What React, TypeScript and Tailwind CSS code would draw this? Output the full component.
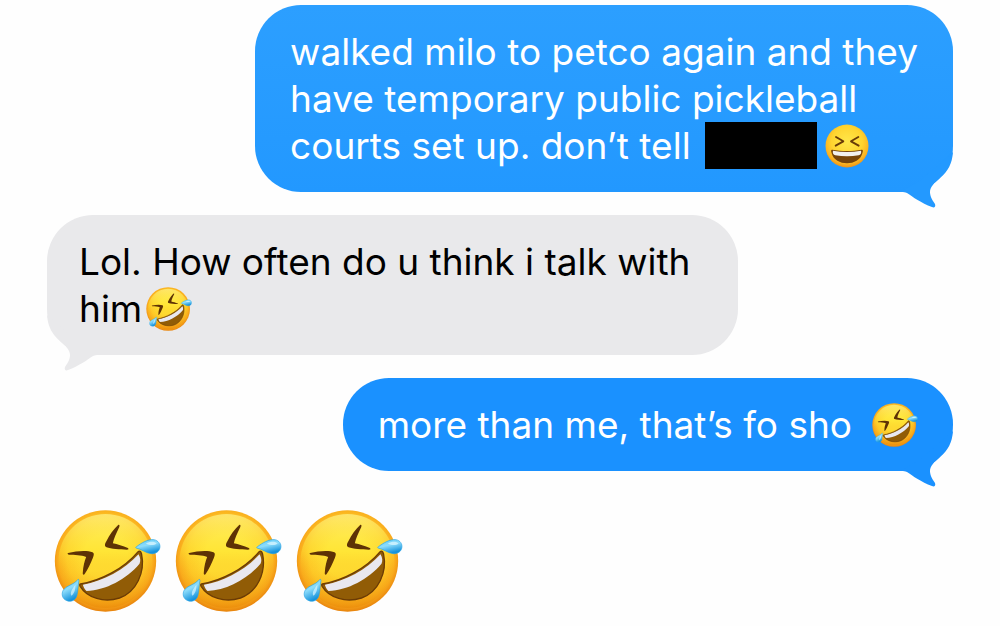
import { useId, type ReactNode } from "react"

function RoflEmoji({ className }: { className: string }) {
  const id = useId()
  const face = `${id}-face`
  const shine = `${id}-shine`
  const tear = `${id}-tear`

  return (
    <svg viewBox="30 30 320 306" className={className} role="img" aria-label="rolling on the floor laughing">
      <defs>
        <radialGradient id={face} cx="0.5" cy="0.46" r="0.54">
          <stop offset="0.4" stopColor="#ffe034" />
          <stop offset="0.7" stopColor="#fecb28" />
          <stop offset="0.88" stopColor="#f9aa1c" />
          <stop offset="1" stopColor="#e8830c" />
        </radialGradient>
        <linearGradient id={shine} x1="0" y1="0" x2="0" y2="1">
          <stop offset="0" stopColor="#fff58a" stopOpacity="0.7" />
          <stop offset="0.4" stopColor="#ffee3a" stopOpacity="0.35" />
          <stop offset="0.6" stopColor="#f9b51c" stopOpacity="0.15" />
          <stop offset="1" stopColor="#ea8a08" stopOpacity="0.65" />
        </linearGradient>
        <linearGradient id={tear} x1="0" y1="0" x2="0.4" y2="1">
          <stop offset="0" stopColor="#63cdf6" />
          <stop offset="0.5" stopColor="#8cdcfb" />
          <stop offset="1" stopColor="#1592dc" />
        </linearGradient>
      </defs>
      <circle cx="184" cy="183" r="152" fill={`url(#${face})`} />
      <circle cx="184" cy="183" r="141" fill={`url(#${shine})`} />
      <path
        d="M72 159C98 152 130 150 145 157C151 160 149 167 146 174C139 190 131 209 121 223C117 226 115 222 116 217C117 199 121 183 126 171C111 164 91 165 74 164C70 163 69 160 72 159Z"
        fill="#5e3205"
      />
      <path
        d="M222 75C226 73 227 77 225 82C217 99 209 115 206 130C219 133 237 138 251 144C255 147 253 149 248 149C228 149 200 147 187 142C180 138 182 131 187 123C196 105 208 88 222 75Z"
        fill="#5e3205"
      />
      <path
        d="M109 252C167 243 239 207 282 155C286 151 290 155 292 161C304 218 276 276 226 294C180 309 129 294 108 259C106 255 106 253 109 252Z"
        fill="#915c06"
      />
      <path
        d="M116 254C177 244 241 209 283 163C289 173 290 184 286 191C246 238 186 270 127 273C122 268 118 261 116 254Z"
        fill="#e9e8ef"
      />
      <path
        d="M109 252C167 243 239 207 282 155C286 151 290 155 292 161C304 218 276 276 226 294C180 309 129 294 108 259C106 255 106 253 109 252Z"
        fill="none"
        stroke="#6b3b05"
        strokeWidth="4"
      />
      <path
        d="M276 141C291 129 312 117 329 119C342 121 349 132 347 143C345 155 334 162 321 161C305 159 293 148 276 144C274 143 274 142 276 141Z"
        fill={`url(#${tear})`}
        stroke="#2ba5e5"
        strokeWidth="2"
      />
      <path
        d="M100 240C103 236 105 239 104 244C101 259 102 274 98 287C94 301 80 307 68 302C54 297 51 282 57 271C66 256 88 255 100 240Z"
        fill={`url(#${tear})`}
        stroke="#2ba5e5"
        strokeWidth="2"
      />
      <path d="M305 131C316 124 331 123 337 131C329 137 317 136 305 131Z" fill="#d9f5ff" opacity="0.75" />
      <path d="M94 254C94 266 91 280 82 287C76 281 83 266 94 254Z" fill="#d9f5ff" opacity="0.7" />
    </svg>
  )
}

function LaughEmoji({ className }: { className: string }) {
  const id = useId()
  const face = `${id}-face`

  return (
    <svg viewBox="38 24 130 132" className={className} role="img" aria-label="grinning squinting face">
      <defs>
        <radialGradient id={face} cx="0.5" cy="0.4" r="0.6">
          <stop offset="0" stopColor="#ffe74a" />
          <stop offset="0.6" stopColor="#ffd42f" />
          <stop offset="0.85" stopColor="#fbb522" />
          <stop offset="1" stopColor="#ee9215" />
        </radialGradient>
      </defs>
      <circle cx="103" cy="90" r="64.5" fill={`url(#${face})`} />
      <path d="M70 63L92 76L69 89M137 63L115 76L138 89" fill="none" stroke="#693b07" strokeWidth="5.5" strokeLinejoin="round" strokeLinecap="round" />
      <path d="M59 101C85 106 121 106 147 101C152 100 151 106 149 112C139 152 67 152 57 112C55 106 54 100 59 101Z" fill="#78450a" />
      <path d="M61 104C88 109 118 109 145 104C147 110 144 117 138 118C116 122 90 122 68 118C62 117 59 110 61 104Z" fill="#f3f1ef" />
    </svg>
  )
}

interface BubbleProps {
  sent?: boolean
  color: string
  tail: string
  children: ReactNode
}

function Bubble({ sent = false, color, tail, children }: BubbleProps) {
  return (
    <div
      className={`relative w-fit rounded-[46px] py-[23px] ${color} ${
        sent ? "self-end px-[35px] text-white" : "self-start pr-12 pl-8 text-black"
      }`}
    >
      <p className="text-[37px] leading-[47px] whitespace-nowrap">{children}</p>
      <svg
        viewBox="0 0 52 58"
        aria-hidden="true"
        className={`absolute -bottom-4 h-[58px] w-[52px] ${sent ? "right-0" : "left-0 -scale-x-100"} ${tail}`}
      >
        <path
          d="M52 2C51 14 47 21 40 27C33 33 29 37 29 42C29 47 32 51 34 54C35 57 33 58 31 57C20 53 12 47 6 43C4 42 3 42 0 42L20 30Z"
          fill="currentColor"
        />
      </svg>
    </div>
  )
}

export default function App() {
  return (
    <main className="flex min-h-screen flex-col gap-[23px] bg-[#fefefe] pt-[5px] pr-[47px] pl-[47px] font-['Inter','Liberation_Sans',sans-serif]">
      <Bubble sent color="bg-linear-to-b from-[#2c9fff] to-[#2298ff]" tail="text-[#2399ff]">
        walked milo to petco again and they
        <br />
        have temporary public pickleball
        <br />
        <span className="flex items-center">
          courts set up. don’t tell
          <span className="ml-[14px] h-[47px] w-28 bg-black" />
          <LaughEmoji className="ml-2 h-11 w-11" />
        </span>
      </Bubble>

      <Bubble color="bg-[#e9e9eb]" tail="text-[#e9e9eb]">
        Lol. How often do u think i talk with
        <br />
        <span className="flex items-center">
          him
          <RoflEmoji className="ml-1 h-11 w-[46px]" />
        </span>
      </Bubble>

      <Bubble sent color="bg-[#1a91ff]" tail="text-[#1a91ff]">
        <span className="flex items-center">
          more than me, that’s fo sho
          <RoflEmoji className="ml-5 h-11 w-[46px]" />
        </span>
      </Bubble>

      <div className="mt-4 flex gap-[14px] pl-[7px]">
        <RoflEmoji className="h-[102px] w-[107px]" />
        <RoflEmoji className="h-[102px] w-[107px]" />
        <RoflEmoji className="h-[102px] w-[107px]" />
      </div>
    </main>
  )
}
